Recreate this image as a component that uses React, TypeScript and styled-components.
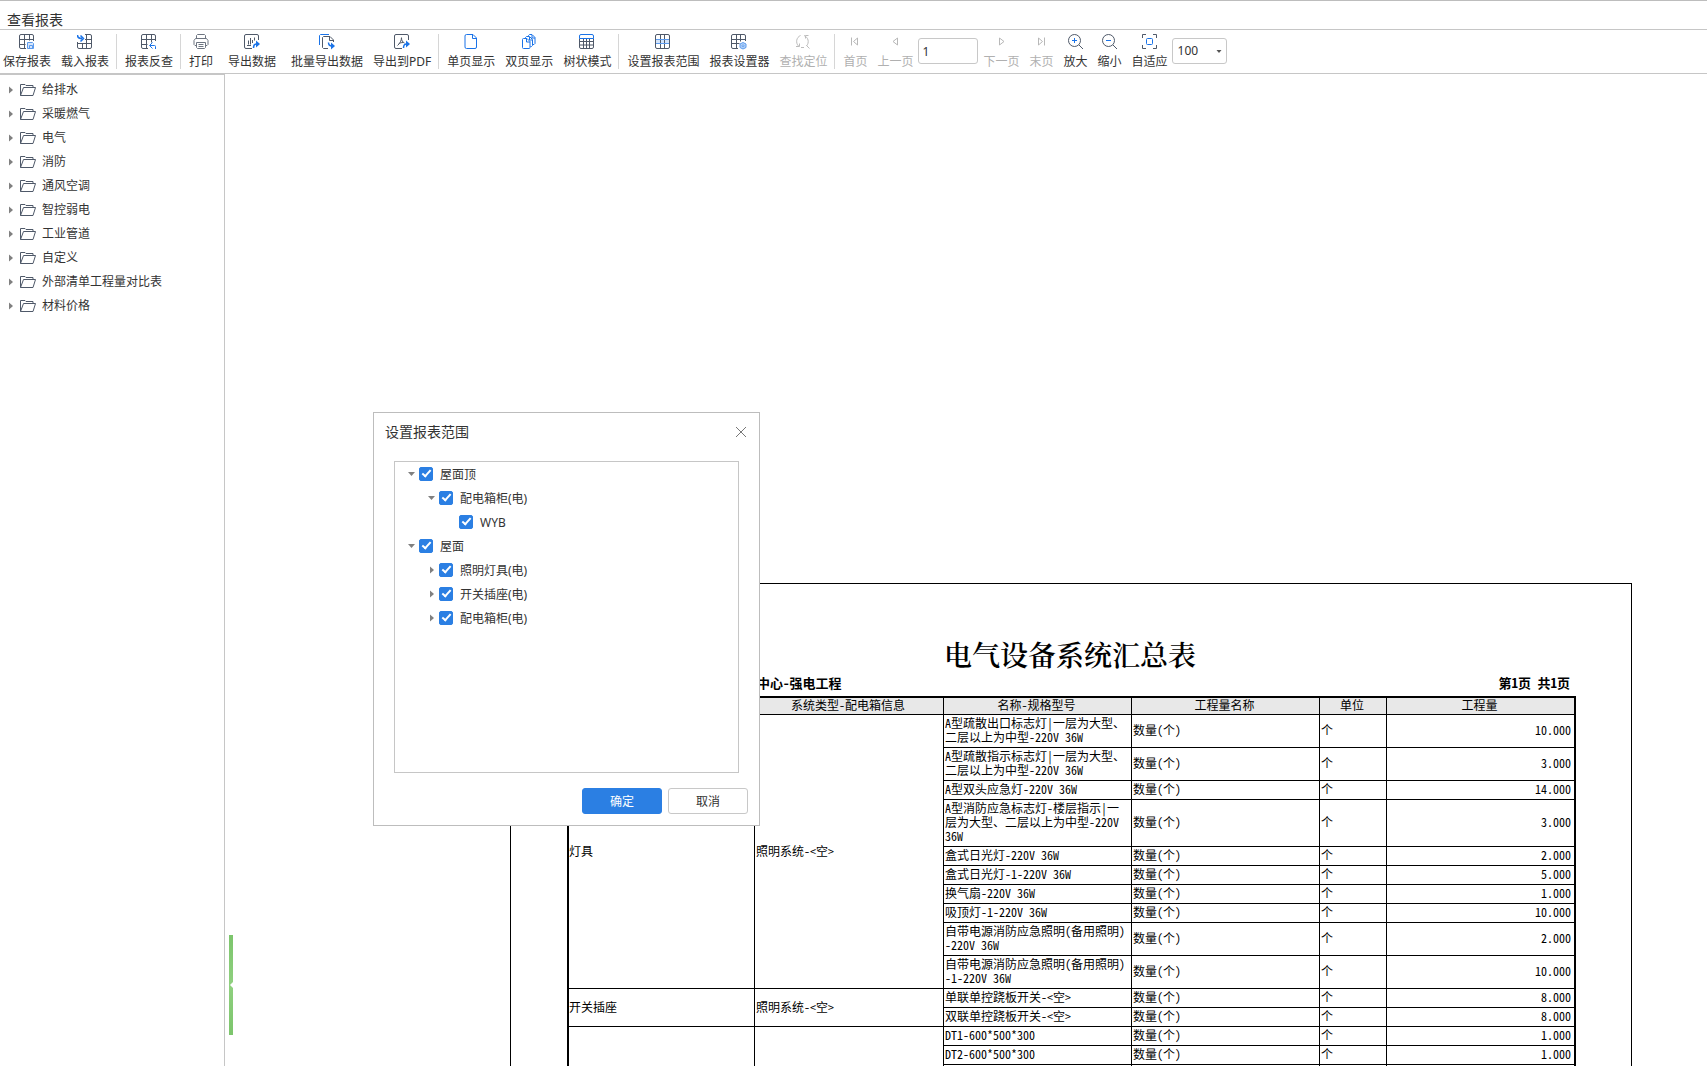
import React, { useState } from "react";
import styled, { createGlobalStyle } from "styled-components";

const UI_FONT = `"Noto Sans", "Noto Sans CJK SC", sans-serif`;
const REPORT_FONT = `"Noto Sans Mono CJK SC", "Noto Sans CJK SC", monospace`;
const INK = "#4f5969";
const BLUE = "#1a73e8";

const GlobalStyle = createGlobalStyle`
  *, *::before, *::after { box-sizing: border-box; }
  body { margin: 0; background: #fff; }
  button, input, select { font: inherit; color: inherit; }
`;

const Window = styled.div`
  position: relative;
  display: flex;
  flex-direction: column;
  height: 100vh;
  overflow: hidden;
  border-top: 1px solid #bdbdbd;
  background: #fff;
  color: #333;
  font-family: ${UI_FONT};
  font-size: 12px;
  line-height: 16px;
`;

const TitleBar = styled.h1`
  flex: none;
  margin: 0;
  padding: 9px 7px 0;
  height: 28px;
  font-size: 14px;
  font-weight: 400;
  line-height: 20px;
`;

/* ---------- toolbar ---------- */

const Toolbar = styled.div`
  flex: none;
  display: flex;
  height: 45px;
  padding-left: 3px;
  border-top: 1px solid #c6c6c6;
  border-bottom: 1px solid #c6c6c6;
`;

const ToolGroup = styled.div`
  display: flex;
  gap: 10px;
`;

const Separator = styled.span`
  flex: none;
  width: 1px;
  height: 35px;
  margin: 4px 8px 0 7px;
  background: #d6d6d6;
`;

const ToolButton = styled.button<{ $roomy?: boolean }>`
  flex: none;
  display: flex;
  flex-direction: column;
  align-items: center;
  gap: 4px;
  margin: 0 ${(p) => (p.$roomy ? 5 : 0)}px 0 0;
  padding: 4px 0 0;
  border: 0;
  background: none;
  white-space: nowrap;
  cursor: pointer;

  &:disabled {
    color: #b0b0b0;
    cursor: default;
  }
`;

const PageInput = styled.input`
  width: 60px;
  height: 26px;
  margin: 8px 5px 0;
  padding: 0 3px;
  border: 1px solid #c8c8c8;
  border-radius: 3px;
  background: #fff;
`;

const ZoomBox = styled.div`
  position: relative;
  width: 55px;
  height: 26px;
  margin: 8px 0 0 4px;

  svg {
    position: absolute;
    top: 12px;
    right: 5px;
    pointer-events: none;
  }
`;

const ZoomSelect = styled.select`
  appearance: none;
  width: 100%;
  height: 100%;
  padding: 0 5px;
  border: 1px solid #c8c8c8;
  border-radius: 3px;
  background: #fff;
`;

const Glyph = ({ children }: { children: React.ReactNode }) => (
  <svg width="16" height="16" viewBox="0 0 16 16" fill="none" stroke={INK} aria-hidden="true">
    {children}
  </svg>
);

const icons: Record<string, React.ReactNode> = {
  save: (
    <Glyph>
      <path d="M7 14.5H2A1.5 1.5 0 0 1 .5 13V2A1.5 1.5 0 0 1 2 .5h11A1.5 1.5 0 0 1 14.5 2v5M5.5.5v14M10.5.5v6M.5 5.5h14M.5 10.5h6" />
      <path d="M8.5 8.5h5l1 1v5h-6z" fill="#d6e6fb" stroke="#5c9bee" />
      <path d="M10.5 14v-2.500h3V14" stroke="#5c9bee" />
    </Glyph>
  ),
  load: (
    <Glyph>
      <path d="M8 .5h5A1.500 1.500 0 0 1 14.500 2v11a1.500 1.500 0 0 1-1.500 1.500H2A1.500 1.500 0 0 1 .5 13V8M5.500 9v5.500M9.500.500v14M8 5.500h6.500M.500 9.500h14" />
      <path d="M.5 1c0 2.500 1.500 3.500 4.500 3.500M3.500 1.500l3 3-3 3" stroke={BLUE} strokeWidth="1.500" />
    </Glyph>
  ),
  trace: (
    <Glyph>
      <path d="M7 14.500H2A1.500 1.500 0 0 1 .500 13V2A1.500 1.500 0 0 1 2 .500h11A1.500 1.500 0 0 1 14.500 2v5M5.500.500v14M10.500.500v8M.500 5.500h14M.500 10.500h6" />
      <path d="M14.500 15v-2.500a1 1 0 0 0-1-1H9M11.500 8.500l-3 3 3 3" stroke={BLUE} />
    </Glyph>
  ),
  print: (
    <Glyph>
      <g stroke="#6d7581">
        <path d="M3.500 4.500v-3l1-1h7l1 1v3M3.500 11.500H2l-1-1V6.500l1.500-2h11l1.500 2v4l-1 1h-1.500" />
        <path d="M3.500 8.500h9v5l-1 1h-7l-1-1zM5.500 10.500h5M5.500 12.500h5" />
      </g>
    </Glyph>
  ),
  exportData: (
    <Glyph>
      <path d="M8 14.500H2A1.500 1.500 0 0 1 .500 13V2A1.500 1.500 0 0 1 2 .500h11A1.500 1.500 0 0 1 14.500 2v4M4.500 6.500v4M6.500 4v6.500M8.500 6v3M10.500 3.500v3M3 11.500h4" />
      <path d="M9.500 14c0-2.500 1-4 3-4h1" stroke={BLUE} strokeWidth="1.500" />
      <path d="M12 6.500l4 3.500-4 3.500z" fill={BLUE} stroke="none" />
    </Glyph>
  ),
  batch: (
    <Glyph>
      <path d="M.500 11V1.500l1-1H10" stroke={BLUE} />
      <path d="M9 14.500H4.500l-1-1v-10l1-1h6.500l3.500 3.500v2M10.500 2.500v4h4" />
      <path d="M9.500 8.500c0 2.500 1 3.500 3.500 3.500" stroke={BLUE} strokeWidth="1.500" />
      <path d="M12 8.500l4 3.500-4 3.500z" fill={BLUE} stroke="none" />
    </Glyph>
  ),
  pdf: (
    <Glyph>
      <path d="M8 14.500H2A1.500 1.500 0 0 1 .500 13V2A1.500 1.500 0 0 1 2 .500h11A1.500 1.500 0 0 1 14.500 2v4" />
      <path d="M7.500 3.500c0 3-1.500 6-4 8M7.500 4c0 2.500 1 4 3 5M4.500 10c1.500-1 2.500-1.500 5-1.500" />
      <path d="M9.500 14c0-2.500 1-4 3-4h1" stroke={BLUE} strokeWidth="1.500" />
      <path d="M12 6.500l4 3.500-4 3.500z" fill={BLUE} stroke="none" />
    </Glyph>
  ),
  single: (
    <Glyph>
      <path d="M3.500.500h6.500l3.500 3.500v9a1.500 1.500 0 0 1-1.500 1.500H3.500A1.500 1.500 0 0 1 2 13V2A1.500 1.500 0 0 1 3.500.500zM9.500.500v4h4" stroke={BLUE} />
    </Glyph>
  ),
  double: (
    <Glyph>
      <g stroke={BLUE}>
        <path d="M2.500 4.500h3.500l3 3v6a1 1 0 0 1-1 1H2.500a1 1 0 0 1-1-1v-8a1 1 0 0 1 1-1zM5.500 5v3h3.500" />
        <path d="M4.500 4V3.500l1-1h3l3 3v6l-1 1H9.500M8.500 3v3h2.500" />
        <path d="M7.500 2V1.500l1-1h2.500l3 3v6l-1 1h-1M11 1v3h3" />
      </g>
    </Glyph>
  ),
  tree: (
    <Glyph>
      <path d="M.500 4.500V13A1.500 1.500 0 0 0 2 14.500h11a1.500 1.500 0 0 0 1.500-1.500V4.500M4.500 4.500v10M7.500 4.500v10M10.500 4.500v10M.500 7.500h14M.500 11h14" />
      <path d="M.500 4.500V2A1.500 1.500 0 0 1 2 .500h11A1.500 1.500 0 0 1 14.500 2v2.500z" stroke={BLUE} />
    </Glyph>
  ),
  range: (
    <Glyph>
      <path d="M1 5h13v5H1z" fill="#d3e4fb" stroke="none" />
      <rect x=".5" y=".5" width="14" height="14" rx="1.500" />
      <path d="M5.500.500v14M9.500.500v14" />
      <path d="M1 5.500h13M1 9.500h13" stroke="#5c9bee" />
    </Glyph>
  ),
  setup: (
    <Glyph>
      <path d="M7 14.500H2A1.500 1.500 0 0 1 .500 13V2A1.500 1.500 0 0 1 2 .500h11A1.500 1.500 0 0 1 14.500 2v5M5.500.500v14M9.500.500v7M.500 5.500h14M.500 9.500h8" />
      <path d="M12 8.500l3 1.500v3.500L12 15l-3-1.500V10z" fill="#b9d5f9" stroke="#5c9bee" />
      <circle cx="12" cy="11.800" r="1" fill="#fff" stroke="#5c9bee" />
    </Glyph>
  ),
  locate: (
    <Glyph>
      <g stroke="#bcbcbc">
        <path d="M5.500 1.500A6.500 6.500 0 0 0 3.500 12M1 12.500h3.500V9.500M9 1.500a6.500 6.500 0 0 1 2.500 10.500M13.500 1.500h-3v3M6 13.500h3M11.500 11.500l3 3" />
      </g>
    </Glyph>
  ),
  first: (
    <Glyph>
      <path d="M4.500 3.500v8M10.500 4v7L6.500 7.500z" stroke="#b8b8b8" />
    </Glyph>
  ),
  prev: (
    <Glyph>
      <path d="M10.500 4v7L6 7.500z" stroke="#b8b8b8" />
    </Glyph>
  ),
  next: (
    <Glyph>
      <path d="M6.500 4v7L11 7.500z" stroke="#b8b8b8" />
    </Glyph>
  ),
  last: (
    <Glyph>
      <path d="M5.500 4v7L9.500 7.500zM11.500 3.500v8" stroke="#b8b8b8" />
    </Glyph>
  ),
  zoomIn: (
    <Glyph>
      <circle cx="6.500" cy="6.500" r="6" />
      <path d="M11 11l4 4" />
      <path d="M4 6.500h5M6.500 4v5" stroke={BLUE} />
    </Glyph>
  ),
  zoomOut: (
    <Glyph>
      <circle cx="6.500" cy="6.500" r="6" />
      <path d="M11 11l4 4" />
      <path d="M4 6.500h5" stroke={BLUE} />
    </Glyph>
  ),
  fit: (
    <Glyph>
      <path d="M.500 4V.500H4M11 .500h3.500V4M14.500 11v3.500H11M4 14.500H.500V11" />
      <rect x="4.500" y="4.500" width="6" height="6" rx="1" stroke={BLUE} />
    </Glyph>
  ),
};

type ToolSpec = { icon: string; label: string; disabled?: boolean; roomy?: boolean };

const fileTools: ToolSpec[] = [
  { icon: "save", label: "保存报表" },
  { icon: "load", label: "载入报表" },
];
const traceTools: ToolSpec[] = [{ icon: "trace", label: "报表反查" }];
const exportTools: ToolSpec[] = [
  { icon: "print", label: "打印", roomy: true },
  { icon: "exportData", label: "导出数据", roomy: true },
  { icon: "batch", label: "批量导出数据" },
  { icon: "pdf", label: "导出到PDF" },
];
const viewTools: ToolSpec[] = [
  { icon: "single", label: "单页显示" },
  { icon: "double", label: "双页显示" },
  { icon: "tree", label: "树状模式" },
];
const settingTools: ToolSpec[] = [
  { icon: "range", label: "设置报表范围" },
  { icon: "setup", label: "报表设置器" },
  { icon: "locate", label: "查找定位", disabled: true },
];
const backTools: ToolSpec[] = [
  { icon: "first", label: "首页", disabled: true },
  { icon: "prev", label: "上一页", disabled: true },
];
const forwardTools: ToolSpec[] = [
  { icon: "next", label: "下一页", disabled: true },
  { icon: "last", label: "末页", disabled: true },
  { icon: "zoomIn", label: "放大" },
  { icon: "zoomOut", label: "缩小" },
  { icon: "fit", label: "自适应" },
];

const Tools = ({ items }: { items: ToolSpec[] }) => (
  <ToolGroup>
    {items.map((t) => (
      <ToolButton key={t.label} type="button" disabled={t.disabled} $roomy={t.roomy}>
        {icons[t.icon]}
        {t.label}
      </ToolButton>
    ))}
  </ToolGroup>
);

/* ---------- sidebar ---------- */

const Main = styled.div`
  flex: 1;
  min-height: 0;
  display: flex;
`;

const Sidebar = styled.nav`
  flex: none;
  width: 225px;
  border-top: 1px solid #c6c6c6;
  border-right: 1px solid #c6c6c6;
`;

const FolderList = styled.ul`
  list-style: none;
  margin: 0;
  padding: 3px 0 0;
`;

const FolderButton = styled.button`
  display: flex;
  align-items: center;
  width: 100%;
  height: 24px;
  padding: 0 0 0 9px;
  border: 0;
  background: none;
  text-align: left;
  cursor: pointer;
`;

const FolderIcon = styled.svg`
  margin: 0 6px 0 7px;
`;

const folders = [
  "给排水",
  "采暖燃气",
  "电气",
  "消防",
  "通风空调",
  "智控弱电",
  "工业管道",
  "自定义",
  "外部清单工程量对比表",
  "材料价格",
];

const RightArrow = () => (
  <svg width="4" height="8" viewBox="0 0 4 8" aria-hidden="true">
    <path d="M0 0.500L4 4L0 7.500z" fill="#808080" />
  </svg>
);

/* ---------- report preview ---------- */

const Preview = styled.main`
  flex: 1;
  min-width: 0;
  display: flex;
  overflow: hidden;
`;

const PanelHandle = styled.button`
  flex: none;
  align-self: flex-end;
  display: flex;
  align-items: center;
  justify-content: flex-end;
  width: 4px;
  height: 100px;
  margin: 0 0 31px 4px;
  padding: 0;
  border: 0;
  background: linear-gradient(#7cc56c, #8fd07f 50%, #7cc56c);
  cursor: pointer;
`;

const Paper = styled.article`
  flex: none;
  width: 1122px;
  margin: 509px 0 0 277px;
  padding: 52px 55px 0 56px;
  border: 1px solid #000;
  border-bottom: 0;
  color: #000;
  font-family: ${REPORT_FONT};
  line-height: 14px;
`;

const ReportTitle = styled.h2`
  margin: 0 3px 0 0;
  font-family: "Noto Serif CJK SC", "Noto Sans CJK SC", serif;
  font-size: 28px;
  font-weight: 600;
  line-height: 36px;
  text-align: center;
`;

const ReportMeta = styled.div`
  display: flex;
  justify-content: space-between;
  padding: 3px 6px 5px 190px;
  font-size: 13px;
  font-weight: 700;
  line-height: 16px;
`;

const ReportTable = styled.table`
  width: 100%;
  table-layout: fixed;
  border: 2px solid #000;
  border-collapse: separate;
  border-spacing: 0;
`;

const HeadCell = styled.th<{ $width: number }>`
  width: ${(p) => p.$width}px;
  padding: 0 3px 2px 1px;
  border-right: 1px solid #000;
  border-bottom: 1px solid #000;
  background: #e8e8e8;
  font-weight: 400;

  &:last-child {
    border-right: 0;
  }
`;

const Cell = styled.td<{ $flush?: boolean; $last?: boolean }>`
  height: 19px;
  padding: 1px 3px 3px ${(p) => (p.$flush ? 0 : 1)}px;
  border-right: ${(p) => (p.$last ? 0 : 1)}px solid #000;
  border-bottom: 1px solid #000;
  text-align: ${(p) => (p.$last ? "right" : "left")};
  vertical-align: middle;
  white-space: pre-line;
`;

const columns: [string, number][] = [
  ["", 186],
  ["系统类型-配电箱信息", 189],
  ["名称-规格型号", 188],
  ["工程量名称", 188],
  ["单位", 67],
  ["工程量", 187],
];

type Group = { kind: string; system: string; rows: [string, string][] };

const groups: Group[] = [
  {
    kind: "灯具",
    system: "照明系统-<空>",
    rows: [
      ["A型疏散出口标志灯|一层为大型、\n二层以上为中型-220V 36W", "10.000"],
      ["A型疏散指示标志灯|一层为大型、\n二层以上为中型-220V 36W", "3.000"],
      ["A型双头应急灯-220V 36W", "14.000"],
      ["A型消防应急标志灯-楼层指示|一\n层为大型、二层以上为中型-220V\n36W", "3.000"],
      ["盒式日光灯-220V 36W", "2.000"],
      ["盒式日光灯-1-220V 36W", "5.000"],
      ["换气扇-220V 36W", "1.000"],
      ["吸顶灯-1-220V 36W", "10.000"],
      ["自带电源消防应急照明(备用照明)\n-220V 36W", "2.000"],
      ["自带电源消防应急照明(备用照明)\n-1-220V 36W", "10.000"],
    ],
  },
  {
    kind: "开关插座",
    system: "照明系统-<空>",
    rows: [
      ["单联单控跷板开关-<空>", "8.000"],
      ["双联单控跷板开关-<空>", "8.000"],
    ],
  },
  {
    kind: "",
    system: "",
    rows: [
      ["DT1-600*500*300", "1.000"],
      ["DT2-600*500*300", "1.000"],
      ["", ""],
    ],
  },
];

/* ---------- range dialog ---------- */

const Dialog = styled.section`
  position: absolute;
  left: 373px;
  top: 411px;
  width: 387px;
  padding: 9px 11px 11px 20px;
  border: 1px solid #bdbdbd;
  background: #fff;
`;

const DialogHead = styled.header`
  display: flex;
  align-items: center;
  justify-content: space-between;
  height: 20px;
  margin: 0 1px 19px -9px;
`;

const DialogTitle = styled.h2`
  margin: 0;
  font-size: 14px;
  font-weight: 400;
  line-height: 20px;
`;

const CloseButton = styled.button`
  display: flex;
  padding: 0 0 1px;
  border: 0;
  background: none;
  cursor: pointer;
`;

const RangeTree = styled.ul`
  list-style: none;
  height: 312px;
  margin: 0 9px 15px 0;
  padding: 0;
  border: 1px solid #c6c6c6;
`;

const RangeRow = styled.li<{ $level: number }>`
  display: flex;
  align-items: center;
  height: 24px;
  padding-left: ${(p) => 13 + p.$level * 20}px;

  label {
    display: flex;
    align-items: center;
    gap: 7px;
  }
`;

const RangeLabel = styled.span`
  padding-top: 2px;
`;

const Toggle = styled.button`
  display: flex;
  align-items: center;
  justify-content: center;
  width: 7px;
  height: 16px;
  margin-right: 4px;
  padding: 0;
  border: 0;
  background: none;
`;

const ToggleGap = styled.span`
  width: 11px;
`;

const CheckBox = styled.input`
  appearance: none;
  position: relative;
  width: 14px;
  height: 14px;
  margin: 0;
  border: 1px solid #b8b8b8;
  border-radius: 2px;
  background: #fff;

  &:checked {
    border-color: #2b7fe3;
    background: #2b7fe3;
  }

  &:checked::after {
    content: "";
    position: absolute;
    left: 4px;
    top: 0;
    width: 5px;
    height: 9px;
    border: solid #fff;
    border-width: 0 2px 2px 0;
    transform: rotate(42deg);
  }
`;

const DialogFoot = styled.footer`
  display: flex;
  justify-content: flex-end;
  gap: 6px;
`;

const DialogButton = styled.button<{ $primary?: boolean }>`
  width: 80px;
  height: 26px;
  padding: 2px 0 0;
  border: 1px solid ${(p) => (p.$primary ? "#2b7fe3" : "#c8c8c8")};
  border-radius: 3px;
  background: ${(p) => (p.$primary ? "#2b7fe3" : "#fff")};
  color: ${(p) => (p.$primary ? "#fff" : "#333")};
  cursor: pointer;
`;

type RangeNode = { label: string; level: number; state: "open" | "closed" | "leaf" };

const rangeNodes: RangeNode[] = [
  { label: "屋面顶", level: 0, state: "open" },
  { label: "配电箱柜(电)", level: 1, state: "open" },
  { label: "WYB", level: 2, state: "leaf" },
  { label: "屋面", level: 0, state: "open" },
  { label: "照明灯具(电)", level: 1, state: "closed" },
  { label: "开关插座(电)", level: 1, state: "closed" },
  { label: "配电箱柜(电)", level: 1, state: "closed" },
];

function RangeDialog({ onClose }: { onClose: () => void }) {
  return (
    <Dialog role="dialog" aria-labelledby="range-title">
      <DialogHead>
        <DialogTitle id="range-title">设置报表范围</DialogTitle>
        <CloseButton type="button" aria-label="关闭" onClick={onClose}>
          <svg width="12" height="12" viewBox="0 0 12 12" stroke="#777" aria-hidden="true">
            <path d="M1 1l10 10M11 1L1 11" />
          </svg>
        </CloseButton>
      </DialogHead>
      <RangeTree>
        {rangeNodes.map((n, i) => (
          <RangeRow key={i} $level={n.level}>
            {n.state === "leaf" ? (
              <ToggleGap />
            ) : (
              <Toggle type="button" aria-label={n.label}>
                {n.state === "closed" ? (
                  <RightArrow />
                ) : (
                  <svg width="7" height="4" viewBox="0 0 7 4" aria-hidden="true">
                    <path d="M0 0h7L3.500 4z" fill="#808080" />
                  </svg>
                )}
              </Toggle>
            )}
            <label>
              <CheckBox type="checkbox" defaultChecked />
              <RangeLabel>{n.label}</RangeLabel>
            </label>
          </RangeRow>
        ))}
      </RangeTree>
      <DialogFoot>
        <DialogButton type="button" $primary onClick={onClose}>
          确定
        </DialogButton>
        <DialogButton type="button" onClick={onClose}>
          取消
        </DialogButton>
      </DialogFoot>
    </Dialog>
  );
}

export default function App() {
  const [dialogOpen, setDialogOpen] = useState(true);

  return (
    <Window>
      <GlobalStyle />
      <TitleBar>查看报表</TitleBar>
      <Toolbar>
        <Tools items={fileTools} />
        <Separator />
        <Tools items={traceTools} />
        <Separator />
        <Tools items={exportTools} />
        <Separator />
        <Tools items={viewTools} />
        <Separator />
        <Tools items={settingTools} />
        <Separator />
        <Tools items={backTools} />
        <PageInput aria-label="页码" defaultValue="1" />
        <Tools items={forwardTools} />
        <ZoomBox>
          <ZoomSelect aria-label="缩放比例" defaultValue="100">
            <option>100</option>
          </ZoomSelect>
          <svg width="6" height="4" viewBox="0 0 6 4" aria-hidden="true">
            <path d="M.500 0h5L3 3z" fill="#555" />
          </svg>
        </ZoomBox>
      </Toolbar>

      <Main>
        <Sidebar>
          <FolderList>
            {folders.map((name) => (
              <li key={name}>
                <FolderButton type="button">
                  <RightArrow />
                  <FolderIcon width="16" height="12" viewBox="0 0 16 12" fill="none" stroke={INK} aria-hidden="true">
                    <path d="M.500 11.500V.500h4.500l1 1h7v2M.500 11.500L3.500 3.500h12l-2.500 8z" />
                  </FolderIcon>
                  {name}
                </FolderButton>
              </li>
            ))}
          </FolderList>
        </Sidebar>

        <Preview>
          <PanelHandle type="button" aria-label="收起面板">
            <svg width="3" height="6" viewBox="0 0 3 6" aria-hidden="true">
              <path d="M3 0v6L0 3z" fill="#fff" />
            </svg>
          </PanelHandle>
          <Paper>
            <ReportTitle>电气设备系统汇总表</ReportTitle>
            <ReportMeta>
              <span>中心-强电工程</span>
              <span>第1页 共1页</span>
            </ReportMeta>
            <ReportTable>
              <thead>
                <tr>
                  {columns.map(([label, width], i) => (
                    <HeadCell key={i} $width={width}>
                      {label}
                    </HeadCell>
                  ))}
                </tr>
              </thead>
              <tbody>
                {groups.map((g, gi) =>
                  g.rows.map(([name, amount], ri) => (
                    <tr key={`${gi}-${ri}`}>
                      {ri === 0 && (
                        <>
                          <Cell $flush rowSpan={g.rows.length}>
                            {g.kind}
                          </Cell>
                          <Cell rowSpan={g.rows.length}>{g.system}</Cell>
                        </>
                      )}
                      <Cell>{name}</Cell>
                      <Cell>{name && "数量(个)"}</Cell>
                      <Cell>{name && "个"}</Cell>
                      <Cell $last>{amount}</Cell>
                    </tr>
                  )),
                )}
              </tbody>
            </ReportTable>
          </Paper>
        </Preview>
      </Main>

      {dialogOpen && <RangeDialog onClose={() => setDialogOpen(false)} />}
    </Window>
  );
}
